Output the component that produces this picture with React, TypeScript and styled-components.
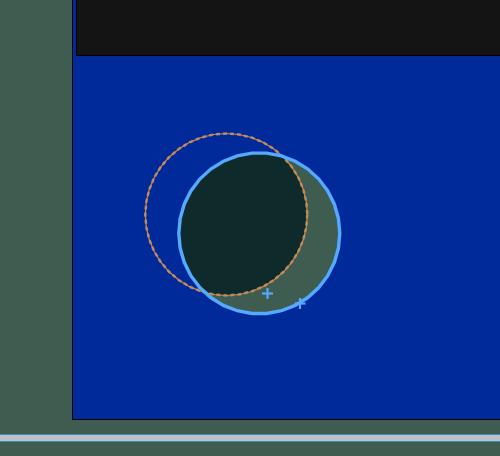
import React from "react";
import styled, { createGlobalStyle } from "styled-components";

const Global = createGlobalStyle`
  html, body { margin: 0; padding: 0; background: #3e5c4f; overflow: hidden; }
  body { font-family: "Liberation Sans", Arial, sans-serif; }
`;

const Page = styled.div`
  width: 500px;
  height: 456px;
  display: flex;
  flex-direction: column;
  background: #3e5c4f;
`;

const Main = styled.div`
  display: flex;
  height: 420px;
`;

const Gutter = styled.div`
  width: 72px;
  flex: none;
`;

const Viewport = styled.div`
  flex: 1;
  display: flex;
  flex-direction: column;
  background: #00299a;
  border-left: 1px solid #000;
  border-bottom: 1px solid #000;
`;

const Header = styled.div`
  height: 55px;
  margin-left: 3px;
  background: #141414;
  border-bottom: 1px solid #000;
  border-left: 1px solid #000;
  flex: none;
`;

const Canvas = styled.svg`
  display: block;
  flex: 1;
  width: 100%;
`;

const Bar = styled.div`
  margin-top: 14px;
  height: 6px;
  background: #c0c0c0;
  border-top: 1px solid #2b8fd8;
  border-bottom: 1px solid #2b8fd8;
`;

function poly(cx: number, cy: number, r: number, n: number) {
  const pts: string[] = [];
  for (let i = 0; i < n; i++) {
    const a = (i / n) * Math.PI * 2;
    pts.push(`${(cx + r * Math.cos(a)).toFixed(2)},${(cy + r * Math.sin(a)).toFixed(2)}`);
  }
  return pts.join(" ");
}

const Cross = ({ x, y }: { x: number; y: number }) => (
  <g stroke="#55aaff" strokeWidth={2.2}>
    <line x1={x - 5.5} y1={y} x2={x + 5.5} y2={y} />
    <line x1={x} y1={y - 5.5} x2={x} y2={y + 5.5} />
  </g>
);

export default function App() {
  const blue = poly(259.3, 233.3, 80.5, 34);
  const orange = poly(226.3, 214.5, 81, 40);
  return (
    <Page>
      <Global />
      <Main>
        <Gutter />
        <Viewport>
          <Header />
          <Canvas viewBox="73 56 427 363" preserveAspectRatio="xMinYMin slice">
            <defs>
              <clipPath id="oc">
                <polygon points={orange} />
              </clipPath>
            </defs>
            <polygon points={blue} fill="#3e5c4f" />
            <polygon points={blue} fill="#0f2a2a" clipPath="url(#oc)" />
            <polygon points={orange} fill="none" stroke="#7f8fa8" strokeWidth={2.5} strokeDasharray="4 3" />
            <polygon points={orange} fill="none" stroke="#e8872a" strokeWidth={1.2} />
            <polygon points={blue} fill="none" stroke="#55aaff" strokeWidth={3.4} />
            <Cross x={267.5} y={293.5} />
            <Cross x={300} y={303.5} />
          </Canvas>
        </Viewport>
      </Main>
      <Bar />
    </Page>
  );
}
